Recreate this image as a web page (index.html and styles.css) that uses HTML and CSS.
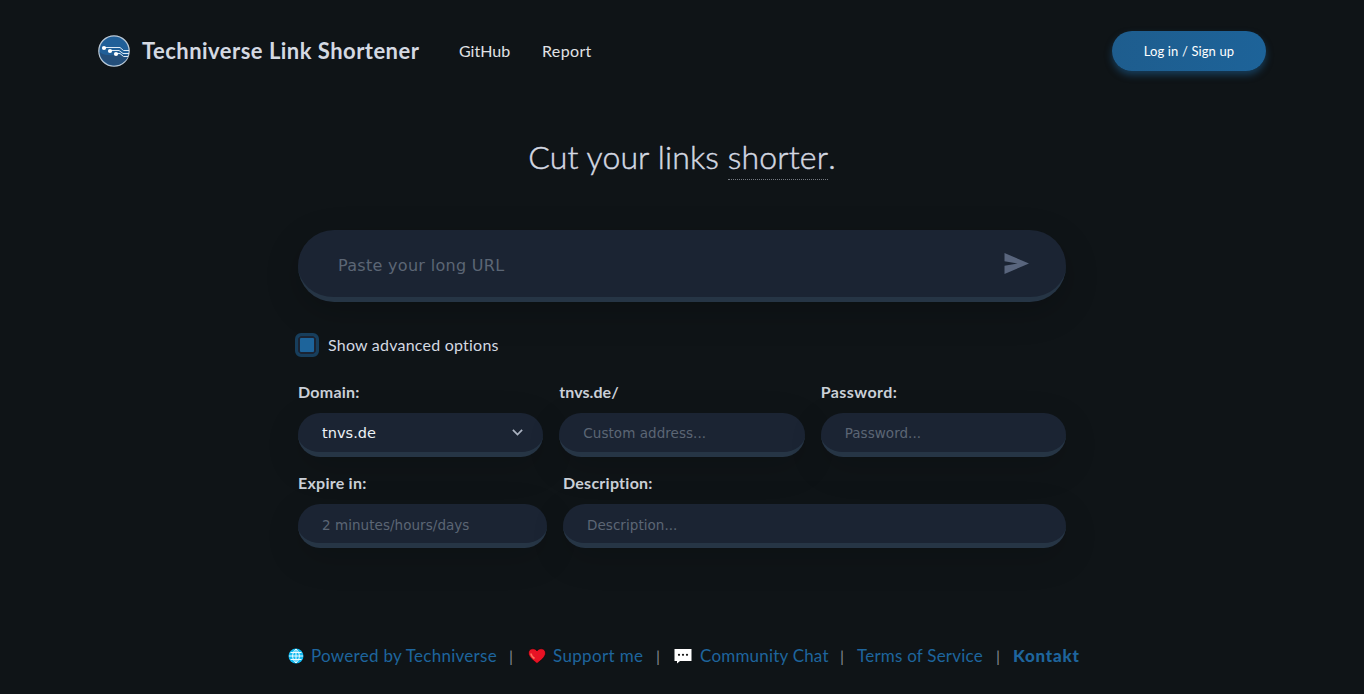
FILE: index.html
```html
<!DOCTYPE html>
<html lang="en">
<head>
<meta charset="utf-8">
<title>Techniverse Link Shortener</title>
<link rel="stylesheet" href="styles.css">
</head>
<body>
<header class="header">
  <a class="brand">
    <svg class="logo" viewBox="0 0 32 32">
      <circle cx="16" cy="16" r="15.2" fill="#205f98" stroke="#bcc9d6" stroke-width="1.2"/>
      <path d="M1.6 17C7 23 20 18 30.400 21A15 15 0 0 1 1.600 17Z" fill="#244e79"/>
      <g fill="none" stroke="#dce9f4" stroke-width="1">
        <path d="M6 12.500H22L25.500 15.500H31M12 15.500H21L25 18.500H31M18 18.500H22L25.500 21.500H30"/>
      </g>
      <g fill="#fff"><circle cx="6" cy="13" r="2.100"/><circle cx="12" cy="16" r="2.100"/><circle cx="18" cy="19" r="2.100"/></g>
    </svg>
    <span class="brand-name">Techniverse Link Shortener</span>
  </a>
  <nav class="nav"><a class="nav-github">GitHub</a><a class="nav-report">Report</a></nav>
  <button class="login">Log in / Sign up</button>
</header>
<main class="main">
  <h1 class="headline">Cut your links <span class="dotted">shorter</span>.</h1>
  <div class="url-box">
    <input class="url-input" type="text" placeholder="Paste your long URL">
    <svg class="send" viewBox="0 0 24 21"><path d="M0 0L24.500 10.500L0 21V12.700L13 10.500L0 8.300Z"/></svg>
  </div>
  <label class="advanced"><span class="checkbox"></span><span class="advanced-text">Show advanced options</span></label>
  <div class="row row-three">
    <div class="field"><label class="label l-domain">Domain:</label>
      <div class="input select"><span>tnvs.de</span><svg class="chevron" viewBox="0 0 10 6"><path d="M.8.700L5 4.900L9.200.700"/></svg></div></div>
    <div class="field"><label class="label l-address">tnvs.de/</label><input class="input" placeholder="Custom address..."></div>
    <div class="field"><label class="label l-password">Password:</label><input class="input" placeholder="Password..."></div>
  </div>
  <div class="row row-two">
    <div class="field"><label class="label l-expire">Expire in:</label><input class="input" placeholder="2 minutes/hours/days"></div>
    <div class="field"><label class="label l-description">Description:</label><input class="input" placeholder="Description..."></div>
  </div>
</main>
<footer class="footer">
  <svg class="emoji globe" viewBox="0 0 16 16"><circle cx="8" cy="8" r="7.500" fill="#13b9f0"/><path d="M8 1V15M1 8H15M2.500 4.500H13.500M2.500 11.500H13.500M8 1C3.500 5 3.500 11 8 15C12.500 11 12.500 5 8 1" fill="none" stroke="#e9faff"/></svg>
  <a class="f-powered">Powered by Techniverse</a><span class="bar">|</span>
  <svg class="emoji heart" viewBox="0 0 18 16"><path d="M9 15.500C5 12.200.5 9 .5 5C.5 .5 6.500-.8 9 3C11.500-.8 17.500.5 17.500 5C17.500 9 13 12.200 9 15.500Z" fill="#e81224" stroke="#080808" stroke-width=".6"/><path d="M3 5.500C3 7 4.500 9 6.500 10.500" fill="none" stroke="#ff725d" stroke-width="1.600"/></svg>
  <a class="f-support">Support me</a><span class="bar">|</span>
  <svg class="emoji chat" viewBox="0 0 18 15"><path d="M.5.500H17.500V12.500H6L3 15V12.500H.5Z" fill="#fff"/><g fill="#111"><circle cx="5" cy="6.300" r="1.100"/><circle cx="9" cy="6.300" r="1.100"/><circle cx="13" cy="6.300" r="1.100"/></g></svg>
  <a class="f-chat">Community Chat</a><span class="bar">|</span>
  <a class="f-terms">Terms of Service</a><span class="bar">|</span>
  <a class="f-kontakt">Kontakt</a>
</footer>
</body>
</html>
```
FILE: styles.css
```css
* { box-sizing: border-box; }
body { margin: 0; height: 694px; overflow: hidden; background: #0f1417; color: #d4d9e2; font: 16px/20px Lato, sans-serif; font-variant-ligatures: none; display: flex; flex-direction: column; }
a, .label, .advanced-text { white-space: nowrap; }
.header { height: 102px; flex: none; padding: 0 98px; display: flex; align-items: center; }
.brand { width: 361px; display: flex; align-items: center; gap: 12px; }
.logo { width: 32px; height: 32px; }
.brand-name { font-size: 22px; font-weight: 700; letter-spacing: .47px; }
.nav { display: flex; color: #e0e2e5; }
.nav-github { width: 83px; }
.nav-report { letter-spacing: .35px; }
.login { width: 154px; height: 40px; margin-left: auto; padding: 0 0 1px; border: 0; border-radius: 20px; background: linear-gradient(90deg, #1e5d8e, #1d6399); box-shadow: 0 4px 7px rgba(30, 99, 153, .5); color: #fff; font: 13px/20px Lato, sans-serif; letter-spacing: .12px; }
.main { width: 768px; height: 510px; flex: none; margin: 0 auto; display: flex; flex-direction: column; }
.headline { margin: 32px 0 0; height: 46px; text-align: center; font-size: 32px; line-height: 45px; font-weight: 300; letter-spacing: .14px; -webkit-text-stroke: .45px #d4d9e2; white-space: nowrap; }
.dotted { display: inline-block; height: 46px; border-bottom: 1px dotted #747980; }
.url-box { height: 72px; margin-top: 50px; padding: 0 37px 0 40px; display: flex; align-items: center; border-radius: 36px; border-bottom: 5px solid #263545; background: #1b2433; box-shadow: 0 10px 35px rgba(0, 0, 0, .2); }
.url-input { flex: 1; height: 30px; margin-top: 4px; padding: 0; border: 0; outline: 0; background: transparent; font: 16px/30px "DejaVu Sans", sans-serif; letter-spacing: .3px; }
input::placeholder { color: #5c6675; opacity: 1; }
.send { width: 25px; height: 21px; fill: #64718a; opacity: .85; }
.advanced { height: 24px; margin: 31px 0 0 -3px; display: flex; align-items: center; gap: 9px; }
.advanced-text { letter-spacing: .22px; }
.checkbox { width: 24px; height: 24px; border: 3px solid #173e5c; border-radius: 6px; background: #1d649b; box-shadow: inset 0 0 0 2px #1b2433; }
.row { display: grid; column-gap: 16px; }
.row-three { margin-top: 25px; grid-template-columns: repeat(3, 1fr); }
.row-two { margin-top: 16px; grid-template-columns: 249px 503px; }
.field { min-width: 0; display: flex; flex-direction: column; gap: 11px; }
.label { font-weight: 700; line-height: 20px; color: #cbd0d8; letter-spacing: .25px; }
.l-password { letter-spacing: .45px; }
.l-address { letter-spacing: .05px; }
.input { width: 100%; height: 44px; padding: 0 24px 0; border: 0; border-bottom: 5px solid #263545; border-radius: 22px; outline: 0; background: #1b2433; box-shadow: 0 10px 35px rgba(0, 0, 0, .15); font: 13.5px/20px "DejaVu Sans", sans-serif; letter-spacing: .05px; }
.row-two .input { padding-top: 2px; }
.select { padding-right: 20px; display: flex; align-items: center; justify-content: space-between; color: #edf2f7; font-size: 14.5px; }
.chevron { width: 11px; height: 7px; fill: none; stroke: #aab2c0; stroke-width: 1.6; }
.footer { margin: auto 0 0; height: 48px; padding: 0 280px 0 288px; display: flex; align-items: center; transform: translateY(-14px); color: #1e659d; font-size: 17px; white-space: nowrap; }
.emoji { flex: none; height: 16px; }
.globe { width: 16px; margin-right: 7px; }
.heart { width: 18px; margin: 0 7px 0 2px; }
.chat { width: 18px; margin-right: 8px; }
.bar { width: 30px; flex: none; text-align: center; color: #858a90; font-size: 16px; }
.f-powered { width: 185px; letter-spacing: .28px; }
.f-support { width: 90px; letter-spacing: .35px; }
.chat { margin-left: 1px; }
.f-chat { width: 127px; letter-spacing: .2px; }
.f-terms { width: 126px; letter-spacing: .22px; }
.f-kontakt { font-weight: 900; letter-spacing: .75px; }
```
